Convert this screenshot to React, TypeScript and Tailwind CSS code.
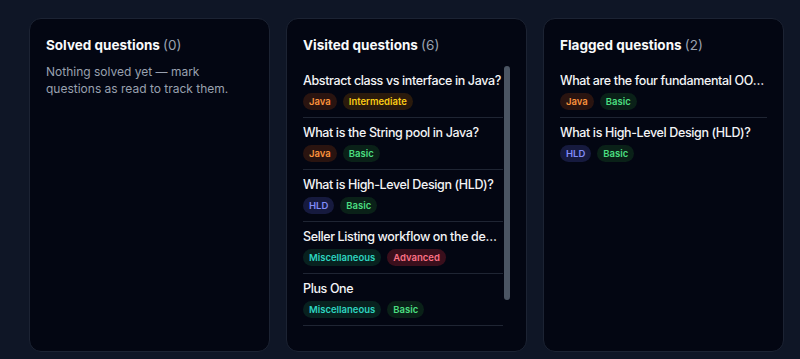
import type { ReactNode } from "react";

type Tag = { label: string; tone: "java" | "intermediate" | "basic" | "hld" | "misc" | "advanced" };

type Question = { title: string; tags: Tag[] };

const toneClass: Record<Tag["tone"], string> = {
  java: "bg-[#2a1410] text-[#fb923c]",
  intermediate: "bg-[#2a1a0c] text-[#facc15]",
  basic: "bg-[#0a2118] text-[#4ade80]",
  hld: "bg-[#161a3e] text-[#818cf8]",
  misc: "bg-[#08211f] text-[#2dd4bf]",
  advanced: "bg-[#3a0f1c] text-[#fb7185]",
};

const java: Tag = { label: "Java", tone: "java" };
const basic: Tag = { label: "Basic", tone: "basic" };
const hld: Tag = { label: "HLD", tone: "hld" };
const misc: Tag = { label: "Miscellaneous", tone: "misc" };

const visited: Question[] = [
  { title: "Abstract class vs interface in Java?", tags: [java, { label: "Intermediate", tone: "intermediate" }] },
  { title: "What is the String pool in Java?", tags: [java, basic] },
  { title: "What is High-Level Design (HLD)?", tags: [hld, basic] },
  { title: "Seller Listing workflow on the desktop marketplace", tags: [misc, { label: "Advanced", tone: "advanced" }] },
  { title: "Plus One", tags: [misc, basic] },
  { title: "What are the four fundamental OOP principles?", tags: [java, basic] },
];

const flagged: Question[] = [
  { title: "What are the four fundamental OOP principles?", tags: [java, basic] },
  { title: "What is High-Level Design (HLD)?", tags: [hld, basic] },
];

function Panel({ title, count, children }: { title: string; count: number; children: ReactNode }) {
  return (
    <section className="flex h-[334px] min-w-0 flex-col rounded-xl border border-[#1c2333] bg-[#030612] p-4">
      <h2 className="text-[13.5px] leading-5 font-bold text-gray-50">
        {title} <span className="font-normal text-gray-400">({count})</span>
      </h2>
      {children}
    </section>
  );
}

function QuestionList({ items, divideLast }: { items: Question[]; divideLast?: boolean }) {
  return (
    <ul className="min-h-0 flex-1 overflow-hidden">
      {items.map((q, i) => (
        <li
          key={q.title + i}
          className={`pt-[6px] pb-[7px] ${divideLast || i < items.length - 1 ? "border-b border-[#1f2533]" : ""}`}
        >
          <p className="truncate text-[12.5px] leading-[18px] font-medium tracking-[-0.03em] text-gray-100">
            {q.title}
          </p>
          <div className="mt-[3px] flex gap-1.5">
            {q.tags.map((t) => (
              <span
                key={t.label}
                className={`rounded-full px-1.5 text-[9.5px] leading-[17px] font-semibold ${toneClass[t.tone]}`}
              >
                {t.label}
              </span>
            ))}
          </div>
        </li>
      ))}
    </ul>
  );
}

export default function App() {
  return (
    <div
      className="h-[359px] w-[800px] overflow-hidden bg-[#0f1626] pt-[18px] pl-[29px]"
      style={{ fontFamily: "Inter, 'Noto Sans', sans-serif" }}
    >
      <div className="grid w-[755px] grid-cols-3 gap-4">
        <Panel title="Solved questions" count={0}>
          <p className="mt-2 text-[12px] leading-[17px] text-gray-400">
            Nothing solved yet — mark questions as read to track them.
          </p>
        </Panel>
        <Panel title="Visited questions" count={6}>
          <div className="relative mt-[11px] flex min-h-0 flex-1 flex-col pr-[7px]">
            <QuestionList items={visited} divideLast />
            <div className="absolute top-0 right-0 h-[234px] w-1.5 rounded-full bg-[#4b5563]" />
          </div>
        </Panel>
        <Panel title="Flagged questions" count={2}>
          <div className="mt-[11px] flex min-h-0 flex-1 flex-col">
            <QuestionList items={flagged} />
          </div>
        </Panel>
      </div>
    </div>
  );
}
